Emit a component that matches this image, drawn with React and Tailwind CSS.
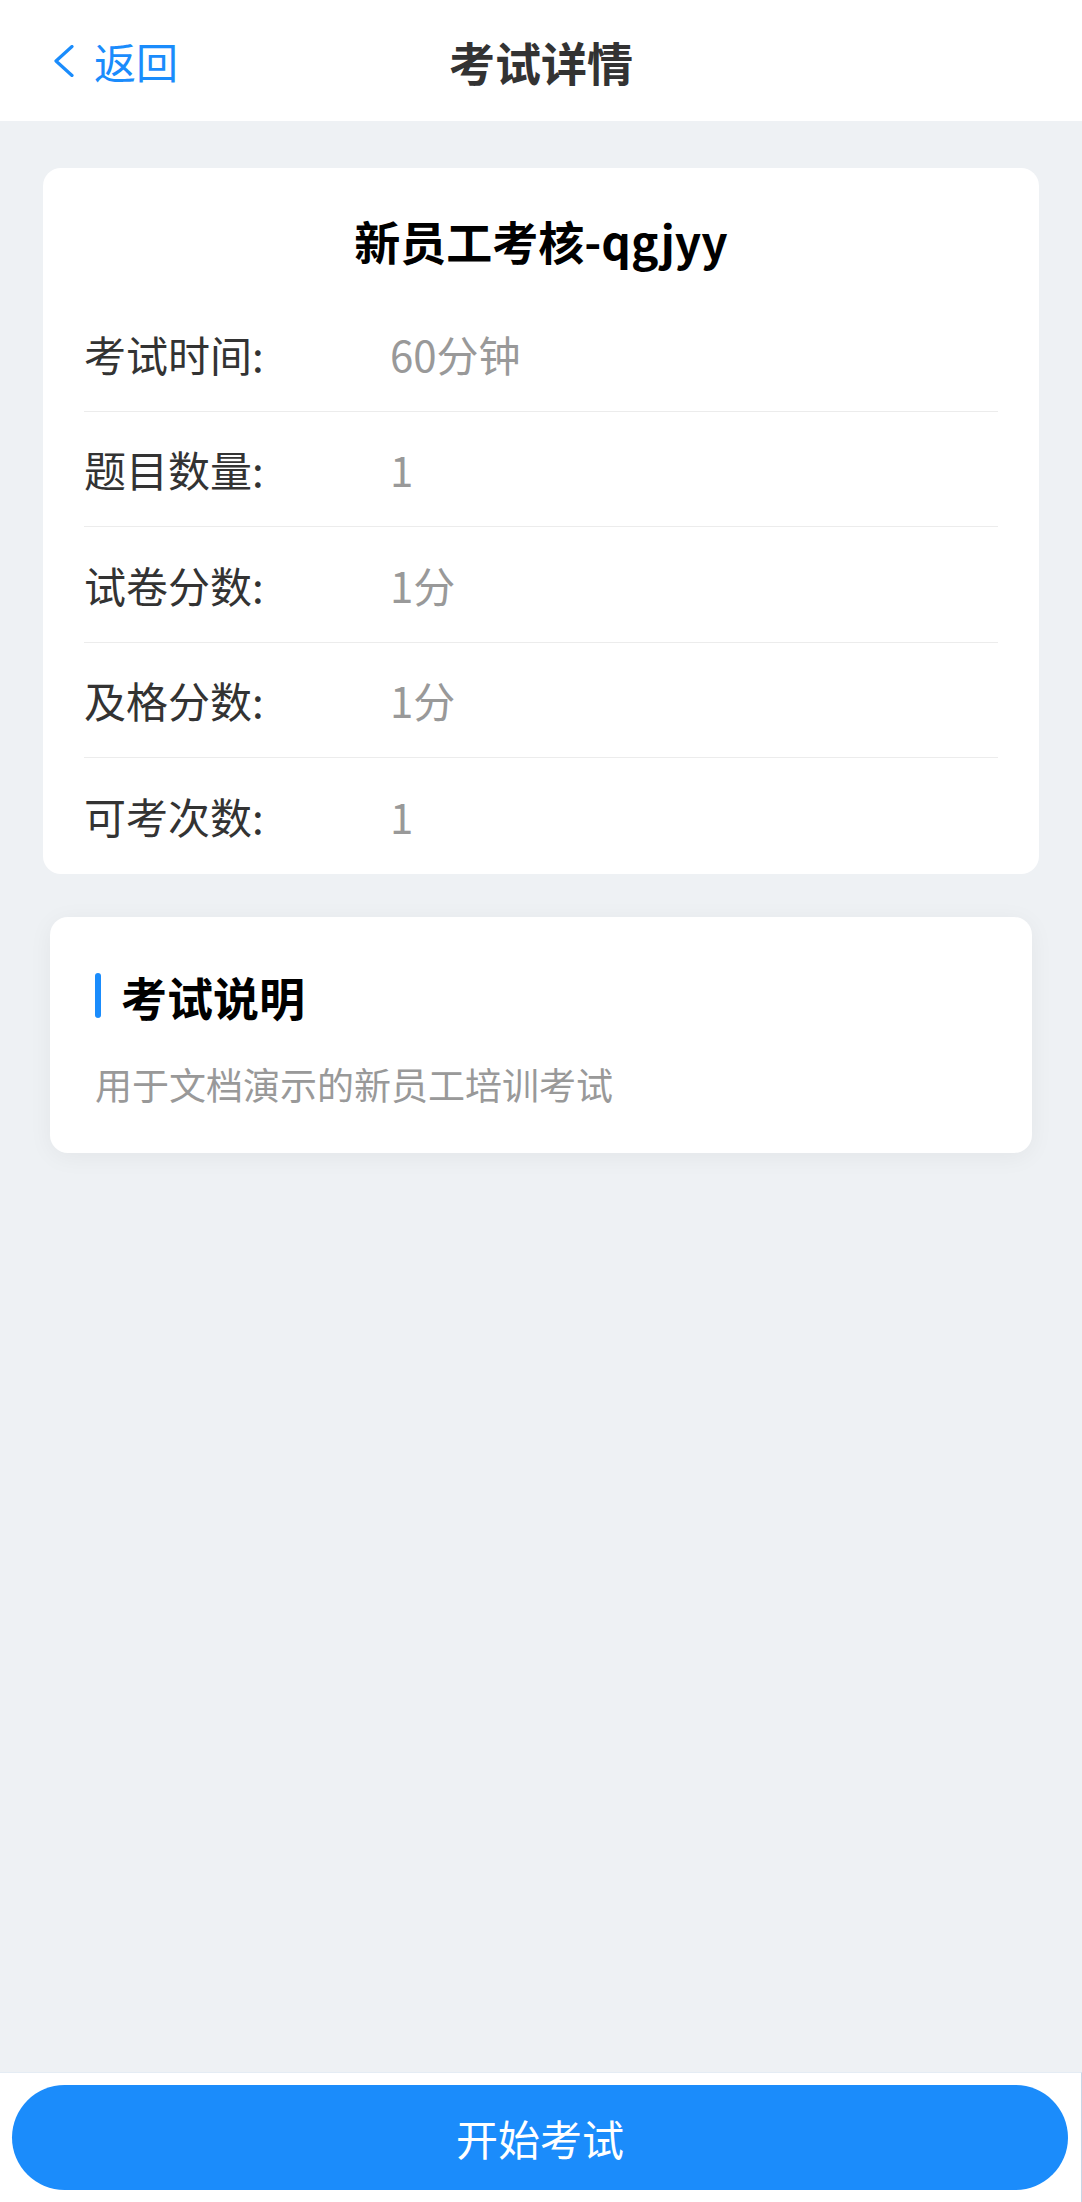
import React from "react";

const rows = [
  ["考试时间:", "60分钟"],
  ["题目数量:", "1"],
  ["试卷分数:", "1分"],
  ["及格分数:", "1分"],
  ["可考次数:", "1"],
];

export default function App() {
  return (
    <div
      className="w-[1082px] min-h-[2202px] bg-[#eef1f4] flex flex-col"
      style={{ fontFamily: '"Noto Sans CJK SC", "Noto Sans", sans-serif' }}
    >
      {/* Header */}
      <div className="h-[121px] bg-white grid grid-cols-[1fr_auto_1fr] items-center">
        <div className="flex items-center pl-[54px] gap-[20px] text-[#1a8cfc]">
          <svg width="20" height="32" viewBox="0 0 20 32" fill="none">
            <polyline
              points="18,1.5 2,16 18,30.5"
              stroke="#1a8cfc"
              strokeWidth="3.2"
              strokeLinecap="round"
              strokeLinejoin="round"
            />
          </svg>
          <span className="text-[42px] leading-none">返回</span>
        </div>
        <div className="text-[46px] font-bold text-[#333333] leading-none">考试详情</div>
        <div />
      </div>

      {/* Main */}
      <div className="flex-1 flex flex-col">
        <div className="mx-[43px] mt-[47px] bg-white rounded-[18px] px-[41px]">
          <div className="h-[128px] pt-[40px] text-center text-[46px] leading-[64px] font-bold text-black">
            新员工考核-qgjyy
          </div>
          {rows.map(([k, v], i) => (
            <div
              key={k}
              className={`h-[115.5px] flex items-center text-[42px] ${
                i < rows.length - 1 ? "border-b border-[#ececec]" : ""
              }`}
            >
              <div className="w-[306px] text-[#333333]">{k}</div>
              <div className="text-[#999999]">{v}</div>
            </div>
          ))}
        </div>

        <div className="mx-[50px] mt-[43px] bg-white rounded-[18px] shadow-[0_4px_24px_rgba(0,0,0,0.05)] pl-[45px] pr-[45px] pt-[56px] pb-[43px]">
          <div className="h-[46px] flex items-center gap-[20px]">
            <div className="w-[6px] h-[45px] rounded-full bg-[#1a8cfc]" />
            <div className="text-[46px] font-bold text-black leading-none">考试说明</div>
          </div>
          <div className="mt-[39px] text-[37px] leading-[52px] text-[#999999]">
            用于文档演示的新员工培训考试
          </div>
        </div>
      </div>

      {/* Footer */}
      <div className="h-[130px] bg-white border-t border-[#e4ecf4] border-r border-r-[#c8d6e6] pt-[12px] pl-[12px] pr-[12px]">
        <button className="w-[1056px] h-[105px] rounded-full bg-[#1b8cfb] text-white text-[42px] flex items-center justify-center">
          开始考试
        </button>
      </div>
    </div>
  );
}
